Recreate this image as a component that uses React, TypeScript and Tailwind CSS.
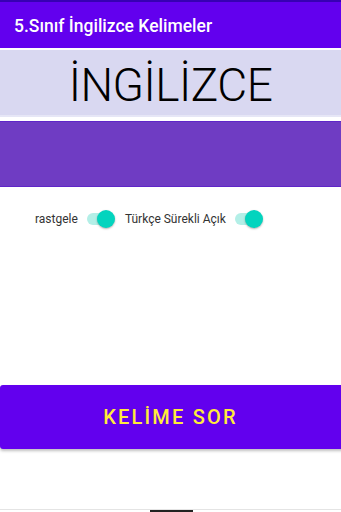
export default function App() {
  return (
    <div
      className="relative w-[341px] h-[512px] overflow-hidden bg-white flex flex-col"
      style={{ fontFamily: 'Roboto, "Noto Sans", sans-serif' }}
    >
      {/* status strip + app bar */}
      <div className="h-[2px] bg-[#3700b3]" />
      <div className="h-[46px] bg-[#6200ee] flex items-center px-[14px]">
        <span className="text-white text-[17.5px] font-medium pt-[2px]">5.Sınıf İngilizce Kelimeler</span>
      </div>

      {/* word card */}
      <div className="mt-[2px] h-[67px] bg-[#d9d8f1] border-b-2 border-[#e6e6f6] flex items-center justify-center">
        <span className="text-black text-[46px] font-light leading-none tracking-[-0.5px] pt-[4px]">İNGİLİZCE</span>
      </div>

      {/* meaning card */}
      <div className="mt-[4px] h-[66px] bg-[#6f3cc3] border-y border-[#5f26c8]" />

      {/* switches */}
      <div className="mt-[22px] flex items-center pl-[35px] text-[12px] text-[#333]">
        <span>rastgele</span>
        <Toggle className="ml-[9px]" />
        <span className="ml-[11px]">Türkçe Sürekli Açık</span>
        <Toggle className="ml-[9px]" />
      </div>

      <div className="flex-1" />

      {/* ask button */}
      <div className="mb-[63px] h-[64px] ml-0 mr-[-4px] rounded-[3px] bg-[#6200ee] shadow-[0_2px_3px_rgba(0,0,0,0.25)] flex items-center justify-center">
        <span className="text-[#ffeb3b] text-[20px] font-medium tracking-[2.2px] pr-[4px]">KELİME SOR</span>
      </div>

      {/* nav indicator */}
      <div className="absolute bottom-0 left-0 right-0 h-[3px] border-t border-[#e4e4e4] flex justify-center">
        <div className="w-[43px] h-[2px] bg-[#222] mt-0 ml-[1px]" />
      </div>
    </div>
  );
}

function Toggle({ className = '' }: { className?: string }) {
  return (
    <div className={`relative w-[27px] h-[20px] flex items-center ${className}`}>
      <div className="w-[26px] h-[12px] rounded-full bg-[#b3efe7]" />
      <div className="absolute right-[-1px] top-[1px] w-[18px] h-[18px] rounded-full bg-[#03d4be] shadow-[0_1px_2px_rgba(0,0,0,0.3)]" />
    </div>
  );
}
